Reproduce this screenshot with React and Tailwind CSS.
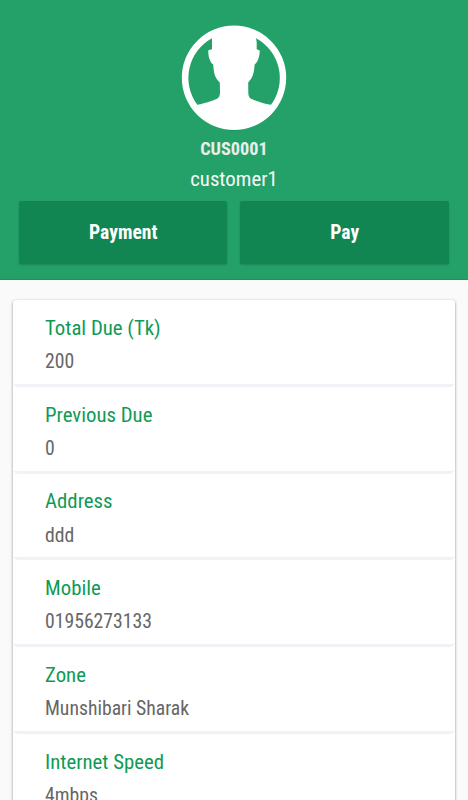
import React from 'react';

const details = [
  { label: 'Total Due (Tk)', value: '200' },
  { label: 'Previous Due', value: '0' },
  { label: 'Address', value: 'ddd' },
  { label: 'Mobile', value: '01956273133' },
  { label: 'Zone', value: 'Munshibari Sharak' },
  { label: 'Internet Speed', value: '4mbps' },
];

function Avatar() {
  return (
    <svg width="106" height="106" viewBox="181 24.7 106 106" className="shrink-0">
      <ellipse cx="233.7" cy="129.6" rx="6.5" ry="1.1" fill="#149b58" />
      <circle cx="234" cy="77.5" r="52.2" fill="#fff" />
      <g fill="#24a168">
        <path d="M212 38V49L208.3 50C208.2 55 209.3 61 213.2 64.3C213.8 73 215 78 219.8 82.3L220 92C220 97.5 218 98.5 212 100.5C206 102.5 201 104 197.3 104.5A45 45 0 0 1 212 38Z" />
        <path d="M256 38L256.7 42V49L259.7 50.2C259.7 55 258.6 61 254.6 64.3C254 73 253 77 248.2 82.3L248.3 92C248.3 97.5 250 98.5 256 100.5C262 102.5 267 104.3 271 104.5A45 45 0 0 0 256 38Z" />
      </g>
    </svg>
  );
}

function ActionButton({ children }) {
  return (
    <button className="h-[63px] flex-1 rounded-[2px] bg-[#128652] pt-[2px] pl-px text-[19.6px] font-bold text-white shadow-[0_1px_2px_rgba(0,0,0,0.18)]">
      {children}
    </button>
  );
}

export default function App() {
  return (
    <div className="h-[800px] overflow-hidden bg-[#fafafa] font-['Roboto_Condensed',Roboto,sans-serif] [font-stretch:75%]">
      <header className="flex h-[280px] flex-col items-center border-b border-[#1b935b] bg-[#24a168] pt-[25px]">
        <Avatar />
        <h1 className="mt-[6px] text-[18.3px] leading-[24px] font-bold text-[#e9eeeb]">CUS0001</h1>
        <p className="mt-[5px] text-[20.8px] leading-[26px] text-[#f4faf7]">customer1</p>
        <div className="mt-[8.5px] flex w-full gap-[13px] pr-[19.5px] pl-[18.5px]">
          <ActionButton>Payment</ActionButton>
          <ActionButton>Pay</ActionButton>
        </div>
      </header>

      <main className="mx-[13px] mt-5 h-[560px] rounded-[3px] bg-white shadow-[0_1px_3px_rgba(0,0,0,0.45)]">
        {details.map((item) => (
          <div key={item.label} className="h-[86.75px] rounded-b-[5px] border-b-[3px] border-[#f1f2f8] pt-[13.75px] pl-8">
            <div className="text-[20.8px] leading-[28px] text-[#109a55]">{item.label}</div>
            <div className="mt-[6.25px] text-[19.7px] leading-[28px] text-[#666666]">{item.value}</div>
          </div>
        ))}
      </main>
    </div>
  );
}
